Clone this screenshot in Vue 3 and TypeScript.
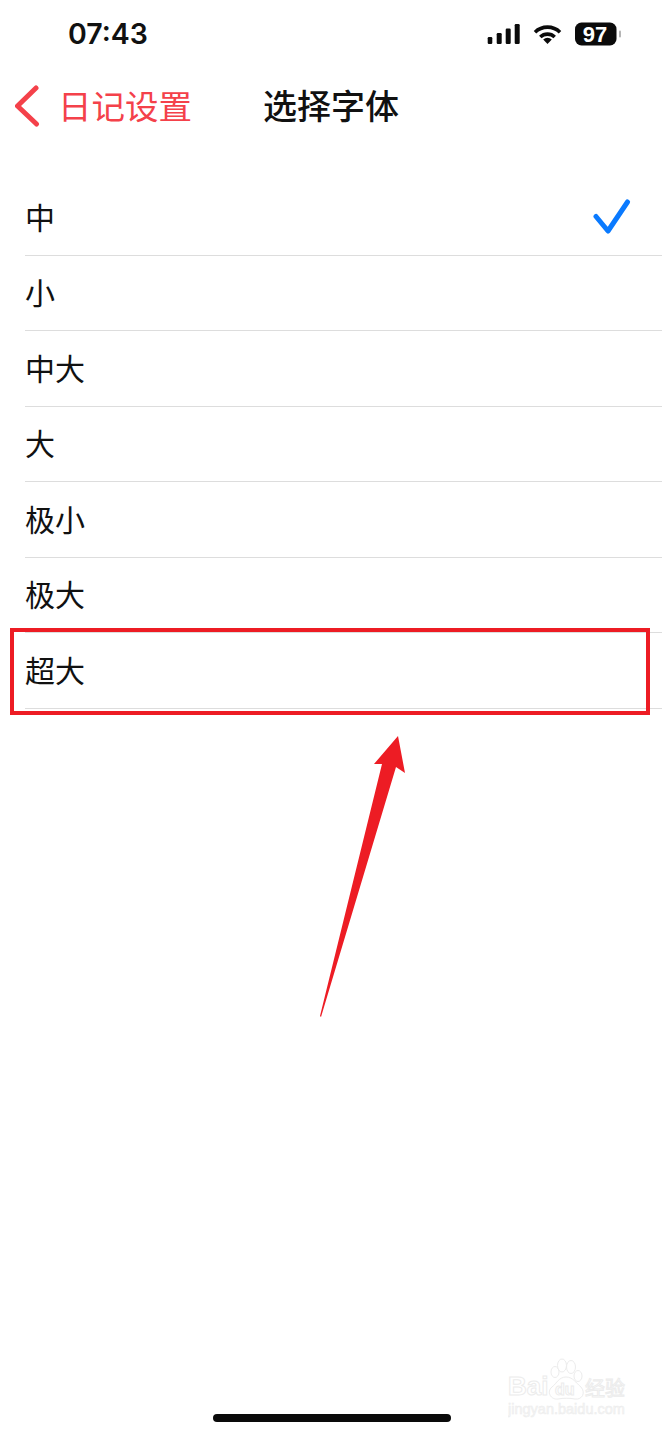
<script setup lang="ts">
const fonts: string[] = ['中', '小', '中大', '大', '极小', '极大', '超大']
</script>

<template>
  <div class="page">
    <header class="status">
      <span class="time">07:43</span>
      <div class="status-icons">
        <svg class="signal" width="33" height="20" viewBox="0 0 33 20" aria-hidden="true">
          <rect x="0.7" y="13" width="4.6" height="7" rx="1.2" />
          <rect x="9.7" y="9" width="5" height="11" rx="1.2" />
          <rect x="18.7" y="4.5" width="5" height="15.5" rx="1.2" />
          <rect x="27.7" y="0" width="5" height="20" rx="1.2" />
        </svg>
        <svg class="wifi" width="29" height="20" viewBox="0 0 29 20" aria-hidden="true">
          <path d="M2 8.2 A18 18 0 0 1 27 8.2" class="arc" />
          <path d="M7.3 13 A10.5 10.5 0 0 1 21.7 13" class="arc" />
          <path d="M14.5 20 L10.2 15.6 A6.2 6.2 0 0 1 18.8 15.6 Z" />
        </svg>
        <svg class="battery" width="47" height="24" viewBox="0 0 47 24" aria-hidden="true">
          <rect x="0" y="0.5" width="41.5" height="23" rx="6.5" fill="#0b0b0b" />
          <rect x="44" y="8.5" width="2" height="7" rx="1" fill="#b5b5b5" />
          <text x="20" y="19.500" text-anchor="middle" class="battery-text">97</text>
        </svg>
      </div>
    </header>

    <nav class="nav">
      <div class="back">
        <svg width="30" height="48" viewBox="0 0 30 48" aria-hidden="true">
          <path d="M21 6 L2.500 24 L21.500 42" class="chevron" />
        </svg>
        <span class="back-label">日记设置</span>
      </div>
      <h1 class="title">选择字体</h1>
      <div></div>
    </nav>

    <ul class="list">
      <li v-for="(font, i) in fonts" :key="font" class="row">
        <span class="row-label">{{ font }}</span>
        <svg v-if="i === 0" class="check" width="38" height="36" viewBox="0 0 38 36" aria-hidden="true">
          <path d="M3 17.500 L15 32 L34.500 3" />
        </svg>
      </li>
    </ul>

    <div class="home"></div>

    <div class="highlight"></div>

    <svg class="arrow" width="90" height="285" viewBox="0 0 90 285" aria-hidden="true">
      <path d="M78 1 L85 38 L76 32 L1 282 L0 281 L62 29 L54 29 Z" />
    </svg>

    <svg class="mark" width="122" height="62" viewBox="0 0 122 62" aria-hidden="true">
      <g class="mark-outline">
        <text x="0" y="37" class="mark-big">Bai</text>
        <ellipse cx="47" cy="14" rx="4" ry="5.500" />
        <ellipse cx="54" cy="7.500" rx="4.500" ry="6.500" />
        <ellipse cx="63" cy="9" rx="4.500" ry="6.500" />
        <ellipse cx="70" cy="18" rx="4" ry="5.500" />
        <path d="M58 19 C51 19 49 25 44 29 C38 34 43 42 50 41 C55 40 62 40 67 41 C74 42 78 35 73 29 C68 25 65 19 58 19 Z" />
        <text x="47" y="37" class="mark-du">du</text>
        <text x="77" y="38" class="mark-cn">经验</text>
        <text x="0" y="56" class="mark-url">jingyan.baidu.com</text>
      </g>
    </svg>
  </div>
</template>

<style>
html, body { margin: 0; background: #fff; }
</style>

<style scoped>
.page {
  position: relative;
  display: flex;
  flex-direction: column;
  width: 662px;
  height: 1430px;
  overflow: hidden;
  background: #fff;
  color: #111;
  font-family: "Noto Sans CJK SC", "Liberation Sans", sans-serif;
}
.status {
  display: flex;
  align-items: center;
  justify-content: space-between;
  height: 68px;
  padding: 0 40px 0 68px;
  flex: none;
}
.time {
  font-family: Inter, "Liberation Sans", sans-serif;
  font-size: 28.500px;
  font-weight: 600;
  line-height: 1;
  color: #111;
  padding-top: 1px;
}
.status-icons { display: flex; align-items: center; gap: 13px; }
.signal, .wifi { fill: #0b0b0b; }
.arc { fill: none; stroke: #0b0b0b; stroke-width: 3.6; }
.battery-text {
  font-family: "Liberation Sans", sans-serif;
  font-size: 22px;
  font-weight: 700;
  fill: #fff;
}
.nav {
  display: grid;
  grid-template-columns: 1fr auto 1fr;
  align-items: center;
  height: 76px;
  flex: none;
}
.back { display: flex; align-items: center; padding-left: 15px; gap: 13px; }
.chevron {
  fill: none;
  stroke: #f4414a;
  stroke-width: 5;
  stroke-linecap: round;
  stroke-linejoin: round;
}
.back-label { font-size: 33.500px; line-height: 48px; padding-bottom: 3px; color: #f4414a; }
.title { margin: 0; font-size: 34px; line-height: 48px; padding-bottom: 3px; font-weight: 500; color: #111; }
.list { list-style: none; margin: 36px 0 0 25px; padding: 0; }
.row {
  box-sizing: border-box;
  display: flex;
  align-items: center;
  justify-content: space-between;
  height: 75.500px;
  padding-right: 31px;
  border-bottom: 1px solid #ddd;
  font-size: 30px;
  line-height: 40px;
}
.row-label { padding-bottom: 3px; }
.check { fill: none; stroke: #0a7aff; stroke-width: 5; stroke-linecap: round; stroke-linejoin: round; }
.home {
  width: 238px;
  height: 8px;
  border-radius: 4px;
  background: #0a0a0a;
  margin: auto auto 8px 213px;
  flex: none;
}
.highlight {
  position: absolute;
  left: 10px;
  top: 628px;
  width: 632px;
  height: 79px;
  border: 4px solid #ed1c24;
}
.arrow { position: absolute; left: 320px; top: 735px; fill: #ed1c24; }
.mark { position: absolute; left: 508px; top: 1358px; }
.mark-outline { fill: #fff; stroke: #ececec; stroke-width: 1; }
.mark-big { font-family: "Liberation Sans", sans-serif; font-size: 26px; font-weight: 700; }
.mark-du { font-family: "Liberation Sans", sans-serif; font-size: 16px; font-weight: 700; }
.mark-cn { font-size: 20px; }
.mark-url { font-family: "Liberation Sans", sans-serif; font-size: 14.500px; stroke-width: 0.500; fill: #f6f6f6; }
</style>
